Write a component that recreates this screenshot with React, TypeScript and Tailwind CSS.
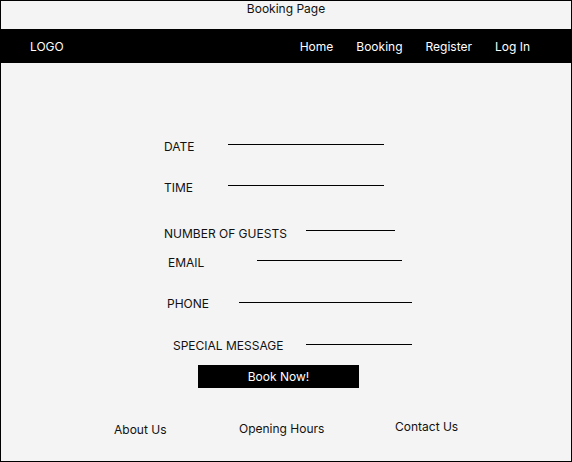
import React from "react";

const rows = [
  { label: "DATE", ml: "ml-[163px]", lw: "w-[64px]", line: "w-[156px] mb-[4px]", mt: "mt-[75px]" },
  { label: "TIME", ml: "ml-[163px]", lw: "w-[64px]", line: "w-[156px] mb-[4px]", mt: "mt-[25px]" },
  { label: "NUMBER OF GUESTS", ml: "ml-[163px]", lw: "w-[142px]", line: "w-[89px] mb-[6px]", mt: "mt-[30px]" },
  { label: "EMAIL", ml: "ml-[167px]", lw: "w-[89px]", line: "w-[145px] mb-[4px]", mt: "mt-[13px]" },
  { label: "PHONE", ml: "ml-[166px]", lw: "w-[72px]", line: "w-[173px] mb-[2px]", mt: "mt-[25px]" },
  { label: "SPECIAL MESSAGE", ml: "ml-[172px]", lw: "w-[133px]", line: "w-[106px] mb-[2px]", mt: "mt-[26px]" },
];

export default function App() {
  return (
    <div
      className="w-[572px] h-[462px] border border-black bg-[#f4f4f4] text-[#111] flex flex-col overflow-hidden"
      style={{ fontFamily: "Inter, 'Liberation Sans', sans-serif" }}
    >
      {/* title */}
      <div className="h-[28px] flex justify-center">
        <span className="text-[12px] leading-4">Booking Page</span>
      </div>

      {/* nav */}
      <nav className="h-[34px] bg-black text-white flex items-center pl-[29px] pr-[41px] text-[12px] pt-[1px]">
        <span>LOGO</span>
        <div className="ml-auto flex gap-[23px]">
          <span>Home</span>
          <span>Booking</span>
          <span>Register</span>
          <span>Log In</span>
        </div>
      </nav>

      {/* form */}
      <div className="flex flex-col">
        {rows.map((r) => (
          <div key={r.label} className={`flex items-center h-4 ${r.mt} ${r.ml}`}>
            <span className={`${r.lw} text-[12px] leading-4 pt-[2px]`}>{r.label}</span>
            <div className={`${r.line} h-px bg-black`} />
          </div>
        ))}
        <button className="mt-[12px] ml-[197px] w-[161px] h-[23px] bg-black text-white text-[12px] flex items-center justify-center">
          Book Now!
        </button>
      </div>

      {/* footer */}
      <div className="flex items-start mt-[33px] text-[12px] leading-4">
        <span className="ml-[113px] w-[125px] mt-[1px]">About Us</span>
        <span className="w-[156px]">Opening Hours</span>
        <span className="-mt-[2px]">Contact Us</span>
      </div>
    </div>
  );
}
